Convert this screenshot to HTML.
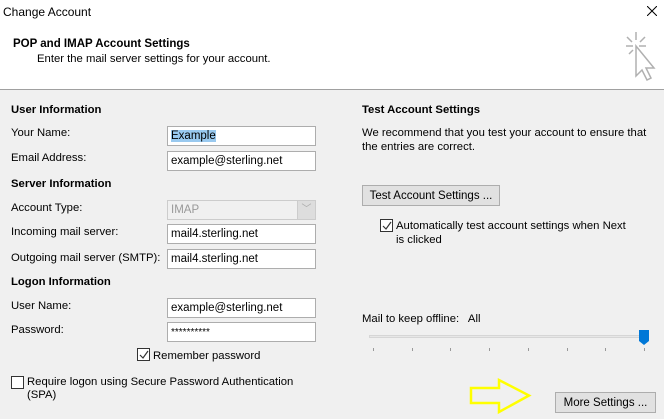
<!DOCTYPE html>
<html><head><meta charset="utf-8"><style>
*{margin:0;padding:0;box-sizing:border-box}
body{width:664px;height:419px;background:#f0f0f0;font-family:"Liberation Sans",sans-serif;font-size:11.3px;color:#000;position:relative;overflow:hidden}
.a{position:absolute;white-space:nowrap}
.b{font-weight:bold}
.in{position:absolute;background:#fff;border:1px solid #adadad;height:20px;padding:3px 0 0 3px;font-size:11.5px}
.btn{position:absolute;background:#e1e1e1;border:1px solid #adadad;text-align:center;padding-top:4px;font-size:11.5px}
.cb{position:absolute;width:13px;height:13px;border:1px solid #333;background:#fff}
.tick{position:absolute;width:1px;height:3px;background:#999;top:348px}
</style></head><body>
<div style="position:absolute;left:0;top:0;width:664px;height:90px;background:#fff;border-bottom:1px solid #a0a0a0"></div>
<div class="a" style="left:3px;top:5px;font-size:12px">Change Account</div>
<svg style="position:absolute;left:647px;top:6px" width="10" height="10"><path d="M0 0L10 10M10 0L0 10" stroke="#000" stroke-width="1"/></svg>
<div class="a b" style="left:13px;top:38px;font-size:11.5px">POP and IMAP Account Settings</div>
<div class="a" style="left:37px;top:53px">Enter the mail server settings for your account.</div>
<svg style="position:absolute;left:624px;top:30px" width="36" height="52" viewBox="0 0 36 52" fill="none" stroke="#b0b0b0" stroke-width="1.5">
<path d="M12 2v8M3 7l5 5M21 7l-5 5M2 16h7M15 16h7M5 24l4-4"/>
<path d="M12 16l0 30 6-6 5 10 4-2-5-10 8 0z" fill="#fff"/>
</svg>

<div class="a b" style="left:11px;top:104px">User Information</div>
<div class="a" style="left:11px;top:127px">Your Name:</div>
<div class="in" style="left:167px;top:126px;width:149px"><span style="background:#99c9ef">Example</span></div>
<div class="a" style="left:11px;top:152px">Email Address:</div>
<div class="in" style="left:167px;top:151px;width:149px">example@sterling.net</div>
<div class="a b" style="left:11px;top:178px">Server Information</div>
<div class="a" style="left:11px;top:202px">Account Type:</div>
<div class="in" style="left:167px;top:200px;width:149px;background:#f0f0f0;border-color:#ccc;color:#999">IMAP</div>
<div style="position:absolute;left:297px;top:201px;width:18px;height:18px;background:#ddd;border-left:1px solid #ccc;color:#aaa;font-size:10px;text-align:center;line-height:18px">﹀</div>
<div class="a" style="left:11px;top:226px">Incoming mail server:</div>
<div class="in" style="left:167px;top:224px;width:149px">mail4.sterling.net</div>
<div class="a" style="left:11px;top:252px">Outgoing mail server (SMTP):</div>
<div class="in" style="left:167px;top:249px;width:149px">mail4.sterling.net</div>
<div class="a b" style="left:11px;top:276px">Logon Information</div>
<div class="a" style="left:11px;top:300px">User Name:</div>
<div class="in" style="left:167px;top:298px;width:149px">example@sterling.net</div>
<div class="a" style="left:11px;top:324px">Password:</div>
<div class="in" style="left:167px;top:322px;width:149px;font-size:10px;padding-top:4px">**********</div>
<div class="cb" style="left:137px;top:348px"><svg width="11" height="11" style="position:absolute;left:0;top:0"><path d="M2 6l3 3 5-7" stroke="#333" fill="none" stroke-width="1.2"/></svg></div>
<div class="a" style="left:153px;top:350px">Remember password</div>
<div class="cb" style="left:11px;top:376px"></div>
<div class="a" style="left:27px;top:376px;line-height:13px">Require logon using Secure Password Authentication<br>(SPA)</div>

<div class="a b" style="left:362px;top:104px">Test Account Settings</div>
<div class="a" style="left:362px;top:126px;line-height:14px">We recommend that you test your account to ensure that<br>the entries are correct.</div>
<div class="btn" style="left:362px;top:185px;width:138px;height:21px">Test Account Settings ...</div>
<div class="cb" style="left:380px;top:219px"><svg width="11" height="11" style="position:absolute;left:0;top:0"><path d="M2 6l3 3 5-7" stroke="#333" fill="none" stroke-width="1.2"/></svg></div>
<div class="a" style="left:396px;top:219px;line-height:14px">Automatically test account settings when Next<br>is clicked</div>
<div class="a" style="left:362px;top:313px">Mail to keep offline:&nbsp;&nbsp; All</div>
<div style="position:absolute;left:369px;top:335px;width:277px;height:3px;background:#e7e7e7;border:1px solid #d6d6d6"></div>
<svg style="position:absolute;left:639px;top:330px" width="10" height="15"><path d="M0 0h10v11l-5 4-5-4z" fill="#0078d7"/></svg>
<div class="tick" style="left:373px"></div><div class="tick" style="left:412px"></div><div class="tick" style="left:450px"></div><div class="tick" style="left:489px"></div><div class="tick" style="left:528px"></div><div class="tick" style="left:567px"></div><div class="tick" style="left:605px"></div><div class="tick" style="left:644px"></div>
<svg style="position:absolute;left:468px;top:377px" width="66" height="39"><path d="M3 11h28V3l30 15.5L31 35v-9H3z" fill="none" stroke="#ffff00" stroke-width="2.5"/></svg>
<div class="btn" style="left:555px;top:392px;width:101px;height:21px">More Settings ...</div>
</body></html>
